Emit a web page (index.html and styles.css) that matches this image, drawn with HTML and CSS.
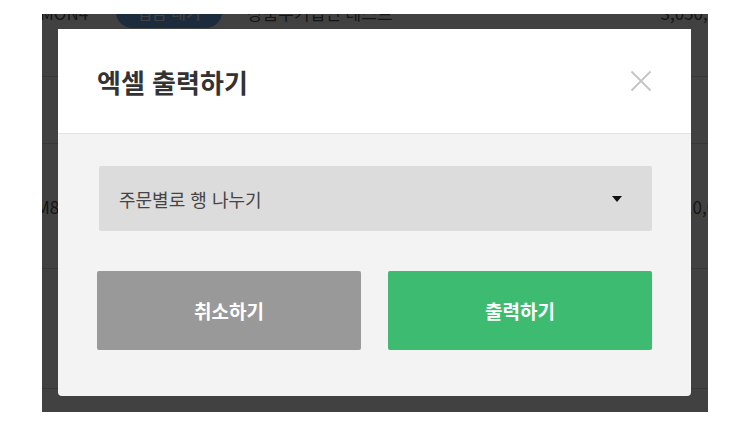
FILE: index.html
```html
<!DOCTYPE html>
<html lang="ko">
<head>
<meta charset="utf-8">
<title>엑셀 출력하기</title>
<link rel="stylesheet" href="styles.css">
</head>
<body>
<div class="screen">
  <div class="table">
    <div class="row row-1">
      <div class="c-id">MON4</div>
      <div class="c-status"><span class="pill">입금 대기</span></div>
      <div class="c-name">상품주기입인 테스트</div>
      <div class="c-amt">3,050,000</div>
    </div>
    <div class="row row-2"></div>
    <div class="row row-3">
      <div class="c-id id-shift">M8</div>
      <div class="c-status"></div>
      <div class="c-name"></div>
      <div class="c-amt amt-shift">10,000</div>
    </div>
    <div class="row row-4"></div>
  </div>
  <div class="overlay"></div>
  <div class="modal">
    <div class="modal-header">
      <h1 class="modal-title">엑셀 출력하기</h1>
      <button class="close" type="button" aria-label="닫기">
        <svg width="22" height="22" viewBox="0 0 22 22"><path d="M1.5 1.5 L20.5 20.5 M20.5 1.5 L1.5 20.5" stroke="#c4c4c4" stroke-width="1.8" fill="none"/></svg>
      </button>
    </div>
    <div class="modal-body">
      <div class="select">
        <span class="select-text">주문별로 행 나누기</span>
        <span class="caret"></span>
      </div>
      <div class="actions">
        <button class="btn btn-cancel" type="button">취소하기</button>
        <button class="btn btn-ok" type="button">출력하기</button>
      </div>
    </div>
  </div>
</div>
</body>
</html>
```
FILE: styles.css
```css
* { box-sizing: border-box; }
html, body { margin: 0; padding: 0; background: #fff; }
body {
  font-family: "Noto Sans CJK KR", "Noto Sans", sans-serif;
  width: 750px;
  height: 426px;
  overflow: hidden;
}
.screen {
  position: relative;
  margin: 14px 0 0 42px;
  width: 666px;
  height: 398px;
  overflow: hidden;
  background: #fff;
}
.table {
  margin-top: -66px;
  width: 700px;
}
.row {
  display: flex;
  align-items: center;
  border-bottom: 1px solid #d6d6d6;
  font-size: 17px;
  color: #555;
}
.row-1 { height: 129px; }
.row-2 { height: 67px; }
.row-3 { height: 125px; }
.row-4 { height: 120px; }
.c-id { width: 76px; margin-left: -2px; }
.id-shift { margin-left: -6px; width: 80px; }
.c-status { width: 131px; }
.c-name { flex: 1; }
.c-amt { width: 120px; text-align: right; margin-right: 6px; }
.amt-shift { margin-right: 7px; }
.pill {
  display: inline-block;
  width: 106px;
  height: 32px;
  line-height: 32px;
  text-align: center;
  border-radius: 16px;
  background: #72adeb;
  color: #fff;
  font-size: 16px;
}
.overlay {
  position: absolute;
  inset: 0;
  background: rgba(0, 0, 0, 0.745);
}
.modal {
  position: absolute;
  left: 16px;
  top: 15px;
  width: 633px;
  height: 367px;
  background: #f3f3f3;
  border-radius: 0 0 4px 4px;
  overflow: hidden;
}
.modal-header {
  height: 105px;
  background: #fff;
  border-bottom: 1px solid #e2e2e2;
  display: flex;
  align-items: center;
  justify-content: space-between;
  padding: 0 39px 0 39px;
}
.modal-title {
  margin: 0;
  font-size: 26px;
  font-weight: 700;
  color: #333;
}
.close {
  border: 0;
  background: none;
  padding: 0;
  width: 22px;
  height: 22px;
  display: flex;
}
.modal-body {
  padding: 32px 39px 0 39px;
}
.select {
  margin-left: 2px;
  height: 65px;
  background: #dcdcdc;
  border-radius: 2px;
  display: flex;
  align-items: center;
  justify-content: space-between;
  padding: 0 30px 0 20px;
}
.select-text {
  font-size: 18px;
  color: #444;
}
.caret {
  width: 0;
  height: 0;
  border-left: 5px solid transparent;
  border-right: 5px solid transparent;
  border-top: 6px solid #111;
  margin-top: 1px;
}
.actions {
  margin-top: 40px;
  display: grid;
  grid-template-columns: 264px 264px;
  column-gap: 27px;
}
.btn {
  height: 79px;
  border: 0;
  border-radius: 2px;
  font-family: "Noto Sans CJK KR", "Noto Sans", sans-serif;
  font-size: 19px;
  font-weight: 700;
  color: #fff;
  padding: 0;
}
.btn-cancel { background: #999; }
.btn-ok { background: #3dbb70; }
```
